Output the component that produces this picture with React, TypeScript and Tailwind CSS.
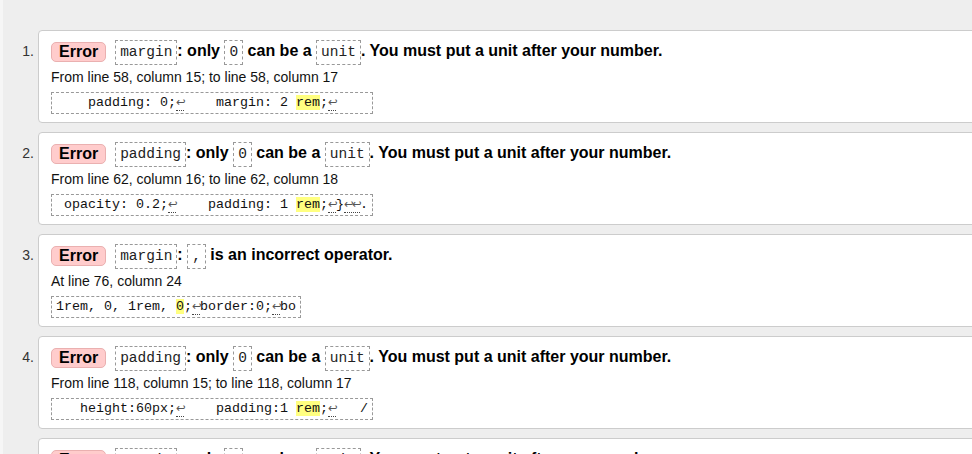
import React from 'react';

type Part = { t: string; hl?: boolean; lf?: boolean };

type Msg = {
  title: React.ReactNode;
  where: string;
  extract: Part[];
};

const Code = ({ children }: { children: React.ReactNode }) => (
  <code className="inline-block border border-dashed border-[#999] px-[4px] font-['Liberation_Mono',monospace] text-[14.5px] leading-[23px] font-normal text-[#222] align-middle">
    {children}
  </code>
);

// splits on ↩ so each line-feed mark gets its dotted underline
const ext = (s: string, hl?: string): Part[] => {
  const out: Part[] = [];
  let rest = s;
  while (rest.length) {
    if (hl && rest.startsWith(hl)) {
      out.push({ t: hl, hl: true });
      rest = rest.slice(hl.length);
      hl = undefined;
      continue;
    }
    const m = rest.match(/^↩+/);
    if (m) {
      out.push({ t: m[0], lf: true });
      rest = rest.slice(m[0].length);
      continue;
    }
    let i = 1;
    while (i < rest.length && rest[i] !== '↩' && !(hl && rest.startsWith(hl, i))) i++;
    out.push({ t: rest.slice(0, i) });
    rest = rest.slice(i);
  }
  return out;
};

const unitTitle = (prop: string) => (
  <>
    <Code>{prop}</Code>: only <Code>0</Code> can be a <Code>unit</Code>. You must put a unit after your number.
  </>
);

const messages: Msg[] = [
  {
    title: unitTitle('margin'),
    where: 'From line 58, column 15; to line 58, column 17',
    extract: ext('    padding: 0;↩    margin: 2 rem;↩    ', 'rem'),
  },
  {
    title: unitTitle('padding'),
    where: 'From line 62, column 16; to line 62, column 18',
    extract: ext(' opacity: 0.2;↩    padding: 1 rem;↩}↩↩.', 'rem'),
  },
  {
    title: (
      <>
        <Code>margin</Code>: <Code>,</Code> is an incorrect operator.
      </>
    ),
    where: 'At line 76, column 24',
    extract: [
      { t: '1rem, 0, 1rem, ' },
      { t: '0', hl: true },
      { t: ';' },
      { t: '↩', lf: true },
      { t: 'border:0;' },
      { t: '↩', lf: true },
      { t: 'bo' },
    ],
  },
  {
    title: unitTitle('padding'),
    where: 'From line 118, column 15; to line 118, column 17',
    extract: ext('   height:60px;↩    padding:1 rem;↩   /', 'rem'),
  },
  {
    title: unitTitle('margin'),
    where: 'From line 124, column 12; to line 124, column 14',
    extract: ext('    margin: 1 rem;↩    ', 'rem'),
  },
];

export default function App() {
  return (
    <div className="h-[454px] w-[972px] overflow-hidden bg-[#eeeeee] border-l-[3px] border-[#f6f6f6] font-['Liberation_Sans',Arial,sans-serif] text-black">
      <ol className="pt-[30px]">
        {messages.map((m, i) => (
          <li key={i} className="flex mb-[9px]">
            <div className="w-[35px] shrink-0 pr-[4px] pt-[9px] text-right text-[14px] leading-[24px] text-[#333]">
              {i + 1}.
            </div>
            <div className="w-[960px] shrink-0 rounded-[4px] border border-[#cccccc] bg-white pl-[12px] pt-[8px] pb-[8px]">
              <p className="flex h-[26px] items-center text-[16px] font-bold whitespace-pre">
                <span className="mr-[9px] inline-block rounded-[5px] border border-[#eab0b0] bg-[#ffcccc] px-[7px] text-[16px] leading-[18px]">
                  Error
                </span>
                <span>{m.title}</span>
              </p>
              <p className="mt-[2px] text-[14px] leading-[20px] text-[#111]">{m.where}</p>
              <div className="mt-[5px] flex">
                <code className="block border border-dashed border-[#999] px-[4px] font-['Liberation_Mono',monospace] text-[13.33px] leading-[20px] whitespace-pre text-[#111]">
                  {m.extract.map((p, j) =>
                    p.hl ? (
                      <span key={j} className="bg-[#ffff80]">
                        {p.t}
                      </span>
                    ) : p.lf ? (
                      <span key={j} className="border-b border-dotted border-[#444]">
                        {p.t.split('').map((c, k) => (
                          <span
                            key={k}
                            className="inline-block w-[8px] text-center font-['DejaVu_Sans',sans-serif] text-[11.5px] leading-[18px] text-[#555]"
                          >
                            {c}
                          </span>
                        ))}
                      </span>
                    ) : (
                      <span key={j}>{p.t}</span>
                    )
                  )}
                </code>
              </div>
            </div>
          </li>
        ))}
      </ol>
    </div>
  );
}
